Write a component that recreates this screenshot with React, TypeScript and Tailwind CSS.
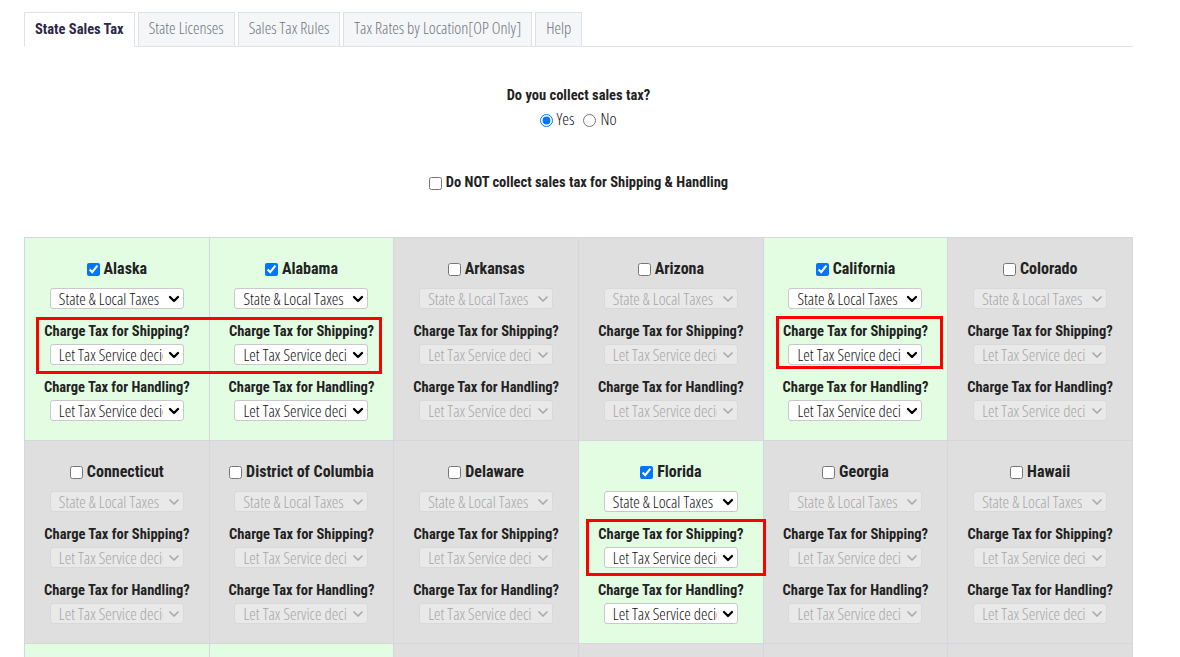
import { ChevronDown } from 'lucide-react'
import clsx from 'clsx'

type StateRow = { name: string; on: boolean }

const states: StateRow[] = [
  { name: 'Alaska', on: true },
  { name: 'Alabama', on: true },
  { name: 'Arkansas', on: false },
  { name: 'Arizona', on: false },
  { name: 'California', on: true },
  { name: 'Colorado', on: false },
  { name: 'Connecticut', on: false },
  { name: 'District of Columbia', on: false },
  { name: 'Delaware', on: false },
  { name: 'Florida', on: true },
  { name: 'Georgia', on: false },
  { name: 'Hawaii', on: false },
]

// next row is only peeking in at the bottom of the viewport
const nextRow = [true, true, false, false, false, false]

const tabs = ['State Sales Tax', 'State Licenses', 'Sales Tax Rules', 'Tax Rates by Location[OP Only]', 'Help']

// narrow light face used for the plain (non-bold) text
const thin = "font-['Open_Sans'] [font-stretch:75%] font-light"

function TaxSelect({ value, enabled, className }: { value: string; enabled: boolean; className?: string }) {
  return (
    <div
      role="combobox"
      aria-disabled={!enabled}
      className={clsx(
        'relative flex items-center w-[134px] h-[21px] rounded-[3px] border pl-[8px] pr-[20px]',
        enabled ? 'bg-white border-[#c9c9c9] text-[#111]' : 'bg-[#e9e9e9] border-[#d9d9d9] text-[#a6a6a6]',
        className,
      )}
    >
      <span className={clsx('block overflow-hidden whitespace-nowrap text-[16.5px] leading-[19px] pb-[1px]', thin)}>{value}</span>
      <ChevronDown
        strokeWidth={enabled ? 3.5 : 2.5}
        className={clsx(
          'pointer-events-none absolute right-[1px] top-[2px] w-[16px] h-[16px]',
          enabled ? 'text-black' : 'text-[#a8a8a8]',
        )}
      />
    </div>
  )
}

function StateCell({ name, on }: StateRow) {
  return (
    <div
      className={clsx(
        'flex flex-col items-center border-r border-b border-[#d4d8dd] pt-[21px] pb-[20px] h-[203px]',
        on ? 'bg-[#e3fde3]' : 'bg-[#dfdfdf]',
      )}
    >
      <label className="flex items-center gap-[4px] h-[20px] text-[16px] font-bold text-[#222]">
        <input type="checkbox" defaultChecked={on} className="w-[13px] h-[13px] m-0" />
        {name}
      </label>
      <TaxSelect value="State & Local Taxes" enabled={on} className="mt-[9px]" />
      <div className="mt-[13px] h-[20px] leading-[20px] text-[14.5px] font-bold text-[#222]">Charge Tax for Shipping?</div>
      <TaxSelect value="Let Tax Service decide" enabled={on} className="mt-[2px]" />
      <div className="mt-[13px] h-[20px] leading-[20px] text-[14.5px] font-bold text-[#222]">Charge Tax for Handling?</div>
      <TaxSelect value="Let Tax Service decide" enabled={on} className="mt-[2px]" />
    </div>
  )
}

export default function App() {
  return (
    <div
      className="h-[657px] overflow-hidden bg-white pl-[24px] pt-[12px] text-[#222]"
      style={{ fontFamily: "'Roboto Condensed', Roboto, sans-serif" }}
    >
      <div className="w-[1109px]">
        {/* tabs */}
        <div className="flex items-end border-b border-[#dee2e6] h-[35px]">
          {tabs.map((t, i) => (
            <div
              key={t}
              className={clsx(
                'h-[35px] -mb-px mr-[3px] flex items-center px-[10px] border border-[#dee2e6]',
                i === 0
                  ? 'bg-white border-b-white font-bold text-[14.5px] text-[#2d2947]'
                  : clsx('bg-[#f5f6f8] text-[#6c757d] text-[16.5px] pb-[3px]', thin),
              )}
            >
              {t}
            </div>
          ))}
        </div>

        {/* collect question */}
        <div className="mt-[39px] flex flex-col items-center">
          <div className="h-[20px] leading-[20px] text-[14.5px] font-bold">Do you collect sales tax?</div>
          <div className={clsx('mt-[4px] flex items-center h-[20px] text-[17px] text-[#111] pb-[2px]', thin)}>
            <label className="flex items-center gap-[3px]">
              <input type="radio" name="collect" defaultChecked className="w-[13px] h-[13px] m-0 mt-[2px]" />
              Yes
            </label>
            <label className="ml-[9px] flex items-center gap-[4px]">
              <input type="radio" name="collect" className="w-[13px] h-[13px] m-0 mt-[2px]" />
              No
            </label>
          </div>
          <label className="mt-[43px] flex items-center gap-[4px] h-[20px] text-[14.5px] font-bold">
            <input type="checkbox" className="w-[13px] h-[13px] m-0" />
            Do NOT collect sales tax for Shipping &amp; Handling
          </label>
        </div>

        {/* states grid */}
        <div className="relative mt-[44px]">
          <div className="grid grid-cols-6 border-l border-t border-[#d4d8dd]">
            {states.map((s) => (
              <StateCell key={s.name} {...s} />
            ))}
            {nextRow.map((on, i) => (
              <div
                key={i}
                className={clsx('h-[203px] border-r border-b border-[#d4d8dd]', on ? 'bg-[#e3fde3]' : 'bg-[#dfdfdf]')}
              />
            ))}
          </div>
          {/* highlight boxes */}
          <div className="pointer-events-none absolute left-[12px] top-[80px] w-[346px] h-[57px] border-[3px] border-[#f00]" />
          <div className="pointer-events-none absolute left-[752px] top-[79px] w-[167px] h-[53px] border-[3px] border-[#f00]" />
          <div className="pointer-events-none absolute left-[562px] top-[282px] w-[180px] h-[57px] border-[3px] border-[#f00]" />
        </div>
      </div>
    </div>
  )
}
